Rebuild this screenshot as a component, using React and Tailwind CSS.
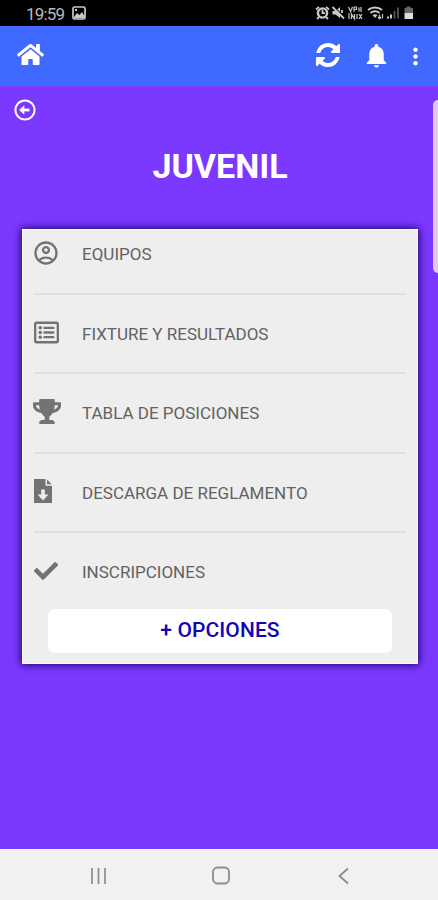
import { FaHome, FaRegListAlt, FaTrophy, FaCheck } from 'react-icons/fa';
import { MdNotifications, MdMoreVert, MdOutlineAccountCircle } from 'react-icons/md';

const BackIcon = () => (
  <svg width="22" height="22" viewBox="0 0 22 22" fill="none" stroke="white">
    <circle cx="11" cy="11" r="9.6" strokeWidth="2" />
    <path d="M8 11h7.5" strokeWidth="2.8" />
    <path d="M5.2 11l5.1-4.8v9.6z" fill="white" stroke="none" />
  </svg>
);

const RefreshIcon = ({ className }) => (
  <svg viewBox="0 128 1536 1536" fill="currentColor" className={className}>
    <path d="M1511 1056q0 5-1 7-64 268-268 434.5t-478 166.5q-146 0-282.5-55t-243.5-157l-129 129q-19 19-45 19t-45-19-19-45v-448q0-26 19-45t45-19h448q26 0 45 19t19 45-19 45l-137 137q71 66 161 102t187 36q134 0 250-65t186-179q11-17 53-117 8-23 30-23h192q13 0 22.5 9.5t9.5 22.5zm25-800v448q0 26-19 45t-45 19h-448q-26 0-45-19t-19-45 19-45l138-138q-148-137-349-137-134 0-250 65t-186 179q-11 17-53 117-8 23-30 23h-199q-13 0-22.5-9.5t-9.5-22.5v-7q65-268 270-434.5t480-166.5q146 0 284 55.5t245 156.5l130-129q19-19 45-19t45 19 19 45z" />
  </svg>
);

const FileDownloadIcon = () => (
  <svg width="18" height="24" viewBox="0 0 18 24" className="-translate-y-px">
    <path
      d="M0 0h11.5v6.8H18V24H0zM7.2 10.5v5H3.6L9 21.6l5.4-6.1h-3.6v-5z"
      fill="currentColor"
      fillRule="evenodd"
    />
    <path d="M13 0.6l4.7 4.7H13z" fill="currentColor" />
  </svg>
);

const menuItems = [
  { label: 'EQUIPOS', icon: <MdOutlineAccountCircle className="size-7 -ml-[2px] -translate-y-px" /> },
  { label: 'FIXTURE Y RESULTADOS', icon: <FaRegListAlt className="size-[25px] -translate-y-px" /> },
  { label: 'TABLA DE POSICIONES', icon: <FaTrophy className="w-7 h-[25px] -translate-x-px -translate-y-px" /> },
  { label: 'DESCARGA DE REGLAMENTO', icon: <FileDownloadIcon /> },
  { label: 'INSCRIPCIONES', icon: <FaCheck className="size-6 -translate-y-px" /> },
];

// Signal, sound and battery icons of the phone
const StatusIcons = () => (
  <svg width="101" height="16" viewBox="0 0 101 16" fill="none" stroke="#c9c9c9" strokeWidth="1.8">
    <circle cx="7.5" cy="8" r="4.6" strokeWidth="2.4" />
    <path d="M1 4.5L4 1.8M14 4.5L11 1.8M7.5 5v3.2H10M4 12l-2 2M11 12l2 2" />
    <path d="M17.5 6h3l4.5-4v11l-4.5-3.5h-3z" fill="#c9c9c9" stroke="none" />
    <path d="M18.5 1.5l11 11" stroke="#000" strokeWidth="1.5" />
    <path d="M17.5 2l11.5 11.5M27 5v3" />
    <path d="M33.5 2l2 4.5 2-4.5M39 7V2h2.5v2.5H39M44 2.5v4M46 2v5M34 8v6M36.5 14V9l3 5V9M42 9v5M44 9l3 5M47 9l-3 5" strokeWidth="1.2" />
    <path d="M53 5c4-3.5 10-3.5 14 0M55.5 8c2.5-2.3 6.5-2.3 9 0" strokeWidth="2" />
    <path d="M57.5 10c1.5-1 3.5-1 5 0L60 13z" fill="#c9c9c9" stroke="none" />
    <path d="M64.5 9.5v4M67.5 9v4.5M63 12l1.5 1.8L66 12" strokeWidth="1.2" />
    <path d="M73 13.5v-2M76 13.5V9.5" strokeWidth="2" />
    <path d="M79.5 13.5V6M83 13.5V2.5" stroke="#565656" strokeWidth="1.8" />
    <path d="M89.5 3h2V1.5h4V3H98v5h-8.5z" fill="#666" stroke="none" />
    <path d="M89.5 8H98v6h-8.5z" fill="#ddd" stroke="none" />
  </svg>
);

const StatusBar = () => (
  <div className="h-[26px] shrink-0 bg-black flex items-center pl-[26px] pr-[22px]">
    <span className="text-[17px] leading-none text-[#b9b9b9] w-[46px] tracking-[-0.8px] translate-y-px">19:59</span>
    <svg width="14" height="14" viewBox="0 0 14 14" fill="none">
      <rect x="1" y="1" width="12" height="12" rx="1.5" stroke="#c9c9c9" strokeWidth="1.7" />
      <path d="M2 11l3-4 2.5 2L10 6l2.5 4v2H2z" fill="#c9c9c9" />
      <path d="M3 3h2v2H3z" fill="#c9c9c9" />
    </svg>
    <div className="ml-auto">
      <StatusIcons />
    </div>
  </div>
);

const Toolbar = () => (
  <header className="h-[60px] shrink-0 bg-[#406aff] text-white flex items-center pl-[17px] pr-[9px]">
    <FaHome className="size-[27px] -translate-y-0.5" />
    <RefreshIcon className="size-6 ml-auto -translate-y-px" />
    <MdNotifications className="size-[29px] ml-[22px] -translate-y-px" />
    <MdMoreVert className="size-[27px] ml-[11px]" />
  </header>
);

const NavigationBar = () => (
  <nav className="h-[51px] shrink-0 bg-[#f1f1f1] border-t border-[#fafafa] pl-[88px] pr-[84px] flex items-center justify-between text-[#8b8b8b]">
    <svg width="20" height="20" viewBox="0 0 20 20" stroke="currentColor" strokeWidth="1.7" className="translate-y-px">
      <path d="M4 2v16M10.5 2v16M17 2v16" />
    </svg>
    <svg width="20" height="20" viewBox="0 0 20 20" fill="none" stroke="currentColor" strokeWidth="1.8" className="translate-y-px">
      <rect x="2" y="1.5" width="16" height="16" rx="4.5" />
    </svg>
    <svg width="20" height="20" viewBox="0 0 20 20" fill="none" stroke="currentColor" strokeWidth="1.8" className="translate-y-px">
      <path d="M14 2.5L5.5 10l8.5 7.5" />
    </svg>
  </nav>
);

const App = () => {
  return (
    <div className="w-full h-screen flex flex-col overflow-hidden font-['Roboto',sans-serif]">
      <StatusBar />
      <Toolbar />
      <main className="relative flex-1 bg-[#7b39ff] pl-[22px] pr-5">
        <button className="block pt-[13px] -ml-[8px]" aria-label="Volver">
          <BackIcon />
        </button>
        <h1 className="mt-[25px] h-10 leading-10 text-center text-[34px] font-bold text-white">
          JUVENIL
        </h1>

        <section className="mt-[43px] h-[435px] overflow-hidden bg-[#eee] border border-[#fafafa] shadow-[0_0_8px_1px_#1c0068]">
          <ul className="-mt-[15px] px-[11px]">
            {menuItems.map((item) => (
              <li
                key={item.label}
                className="h-[79.5px] flex items-center border-b-2 border-[#dfdfdf] last:border-transparent text-[#737373]"
              >
                <span className="w-12 shrink-0">{item.icon}</span>
                <span className="text-[17px] text-[#626262] translate-y-px">{item.label}</span>
              </li>
            ))}
          </ul>
          <button className="block ml-[25px] -mt-[4px] pt-px w-[344px] h-11 rounded-md bg-white text-[21px] font-medium tracking-[0.1px] text-[#1008b4]">
            + OPCIONES
          </button>
        </section>

        {/* Edge panel handle of the phone */}
        <div className="absolute right-0 top-[14px] w-[5px] h-[173px] rounded-l-md bg-[#dfc9fa]" />
      </main>
      <NavigationBar />
    </div>
  );
};

export default App;
